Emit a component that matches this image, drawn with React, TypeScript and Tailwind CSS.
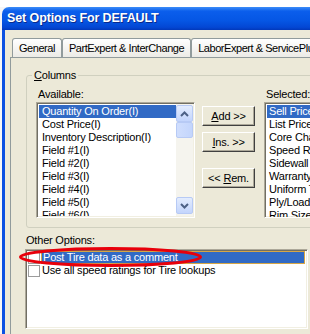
import React from "react"

const available = [
    "Quantity On Order(I)",
    "Cost Price(I)",
    "Inventory Description(I)",
    "Field #1(I)",
    "Field #2(I)",
    "Field #3(I)",
    "Field #4(I)",
    "Field #5(I)",
    "Field #6(I)",
]

const selected = [
    "Sell Price(I)",
    "List Price(I)",
    "Core Charge(I)",
    "Speed Rating(I)",
    "Sidewall Type",
    "Warranty(I)",
    "Uniform Tire Grade",
    "Ply/Load Range",
    "Rim Size(I)",
]

function ScrollButton({ up }: { up?: boolean }) {
    return (
        <div className="h-[17px] w-[17px] rounded-[2px] border border-[#B7CAF5] bg-[linear-gradient(to_bottom,#E3ECFE,#C3D5FC)] flex items-center justify-center">
            <svg width="9" height="6" viewBox="0 0 9 6">
                <path
                    d={up ? "M1 5 L4.5 1.5 L8 5" : "M1 1 L4.5 4.5 L8 1"}
                    fill="none"
                    stroke="#4D6185"
                    strokeWidth="2"
                />
            </svg>
        </div>
    )
}

function WinButton({ children }: { children: React.ReactNode }) {
    return (
        <div className="h-[20px] w-[53px] border border-t-white border-l-white border-r-[#404040] border-b-[#404040] shadow-[inset_-1px_-1px_0_#ACA899] bg-[#ECE9D8] flex items-center justify-center whitespace-pre tracking-[-0.2px]">
            {children}
        </div>
    )
}

const tabClass =
    "h-full shrink-0 whitespace-nowrap px-[6px] pt-[3px] border border-b-0 border-[#919B9C] rounded-t-[3px] bg-[linear-gradient(to_bottom,#FFFFFF,#ECEBE6)]"

export default function App() {
    return (
        <div className="relative w-[310px] h-[334px] overflow-hidden bg-[#F6F6F6] font-['Liberation_Sans',Arial,sans-serif] text-[11px] leading-[13px] text-black">
            {/* desktop behind */}
            <div className="h-[7px] bg-white" />

            <div className="ml-[2px] flex flex-col h-[327px]">
                {/* Title bar */}
                <div className="h-[23px] shrink-0 rounded-tl-[7px] bg-[linear-gradient(to_bottom,#3C8DF8_0%,#0B5EEC_18%,#0556E4_60%,#0347D4_88%,#0238BA_100%)] flex items-center pl-[5px]">
                    <span className="text-white font-bold text-[12.5px] tracking-[-0.1px] [text-shadow:1px_1px_0_#0A2A8C]">
                        Set Options For DEFAULT
                    </span>
                </div>

                {/* Window body */}
                <div className="flex-1 overflow-hidden bg-[#ECE9D8] border-l-[3px] border-[#0B50E2] pt-[8px] pl-[5px]">
                    {/* Tabs */}
                    <div className="flex h-[19px] w-[330px] ml-[2px] tracking-[-0.45px]">
                        <div className={tabClass}>General</div>
                        <div className={tabClass}>PartExpert &amp; InterChange</div>
                        <div className={tabClass}>LaborExpert &amp; ServicePlus</div>
                    </div>

                    {/* Tab panel */}
                    <div className="w-[320px] h-[290px] border-t border-l border-[#919B9C] pl-[15px]">
                        {/* Columns group */}
                        <fieldset className="mt-[11px] w-[320px] border border-[#D0D0BF] rounded-[3px] pl-[9px] pt-[6px] pb-[9px]">
                            <legend className="px-[2px] -ml-[4px] tracking-[-0.2px]">
                                <span className="underline">C</span>olumns
                            </legend>
                            <div className="flex">
                                {/* Available */}
                                <div className="flex flex-col">
                                    <div className="pl-[2px] h-[13px] tracking-[-0.2px]">Available:</div>
                                    <div className="mt-[1px] w-[159px] h-[116px] border border-t-[#ACA899] border-l-[#ACA899] border-b-white border-r-white shadow-[inset_1px_1px_0_#716F64,inset_-1px_-1px_0_#F1EFE2] bg-white p-[1px] flex">
                                        <div className="flex-1 overflow-hidden pl-[1px] pt-[1px]">
                                            {available.map((item, i) => (
                                                <div
                                                    key={item}
                                                    className={`h-[13px] pl-[3px] whitespace-nowrap tracking-[-0.2px] ${i === 0 ? "bg-[#316AC5] text-white" : ""}`}
                                                >
                                                    {item}
                                                </div>
                                            ))}
                                        </div>
                                        {/* Scrollbar */}
                                        <div className="w-[17px] flex flex-col bg-[#F5F4EE] pt-[1px] pb-[2px]">
                                            <ScrollButton up />
                                            <div className="h-[16px] w-[17px] rounded-[2px] border border-[#B7CAF5] bg-[linear-gradient(to_right,#D0DEFD,#C3D5FC)]" />
                                            <div className="flex-1" />
                                            <ScrollButton />
                                        </div>
                                    </div>
                                </div>

                                {/* Buttons */}
                                <div className="ml-[7px] pt-[18px] flex flex-col">
                                    <WinButton>
                                        <span className="underline">A</span>dd &gt;&gt;
                                    </WinButton>
                                    <div className="h-[6px]" />
                                    <WinButton>
                                        <span className="underline">I</span>ns. &gt;&gt;
                                    </WinButton>
                                    <div className="h-[16px]" />
                                    <WinButton>
                                        {"<< "}
                                        <span className="underline">R</span>em.
                                    </WinButton>
                                </div>

                                {/* Selected */}
                                <div className="ml-[9px] flex flex-col">
                                    <div className="pl-[2px] h-[13px] tracking-[-0.2px]">Selected:</div>
                                    <div className="mt-[1px] w-[120px] h-[116px] border border-t-[#ACA899] border-l-[#ACA899] border-b-white border-r-white shadow-[inset_1px_1px_0_#716F64,inset_-1px_-1px_0_#F1EFE2] bg-white p-[1px] overflow-hidden">
                                        <div className="pl-[1px] pt-[1px]">
                                            {selected.map((item, i) => (
                                                <div
                                                    key={item}
                                                    className={`h-[13px] pl-[2px] whitespace-nowrap tracking-[-0.2px] ${i === 0 ? "bg-[#316AC5] text-white" : ""}`}
                                                >
                                                    {item}
                                                </div>
                                            ))}
                                        </div>
                                    </div>
                                </div>
                            </div>
                        </fieldset>

                        {/* Other options */}
                        <div className="mt-[6px] h-[13px] tracking-[-0.2px]">Other Options:</div>
                        <div className="mt-[2px] -ml-[1px] w-[283px] h-[80px] border border-t-[#ACA899] border-l-[#ACA899] border-b-white border-r-white shadow-[inset_1px_1px_0_#716F64,inset_-1px_-1px_0_#F1EFE2] bg-white pt-[1px] pl-[2px] pr-[2px]">
                            <div className="flex items-center h-[13px]">
                                <div className="w-[12px] h-[12px] border border-[#9C9C9C] bg-white shrink-0" />
                                <div className="ml-[1px] flex-1 h-[13px] bg-[#316AC5] border border-[#D6A646] text-white pl-[1px] leading-[11px] tracking-[-0.2px] whitespace-nowrap">
                                    Post Tire data as a comment
                                </div>
                            </div>
                            <div className="flex items-center h-[13px]">
                                <div className="w-[12px] h-[12px] border border-[#9C9C9C] bg-white shrink-0" />
                                <div className="ml-[2px] tracking-[-0.2px] whitespace-nowrap">
                                    Use all speed ratings for Tire lookups
                                </div>
                            </div>
                        </div>
                    </div>
                </div>
            </div>

            {/* Red annotation ellipse */}
            <svg className="absolute left-0 top-0 pointer-events-none" width="310" height="334">
                <ellipse cx="110.5" cy="257" rx="90" ry="8.5" fill="none" stroke="#E8000B" strokeWidth="3" />
            </svg>
        </div>
    )
}
